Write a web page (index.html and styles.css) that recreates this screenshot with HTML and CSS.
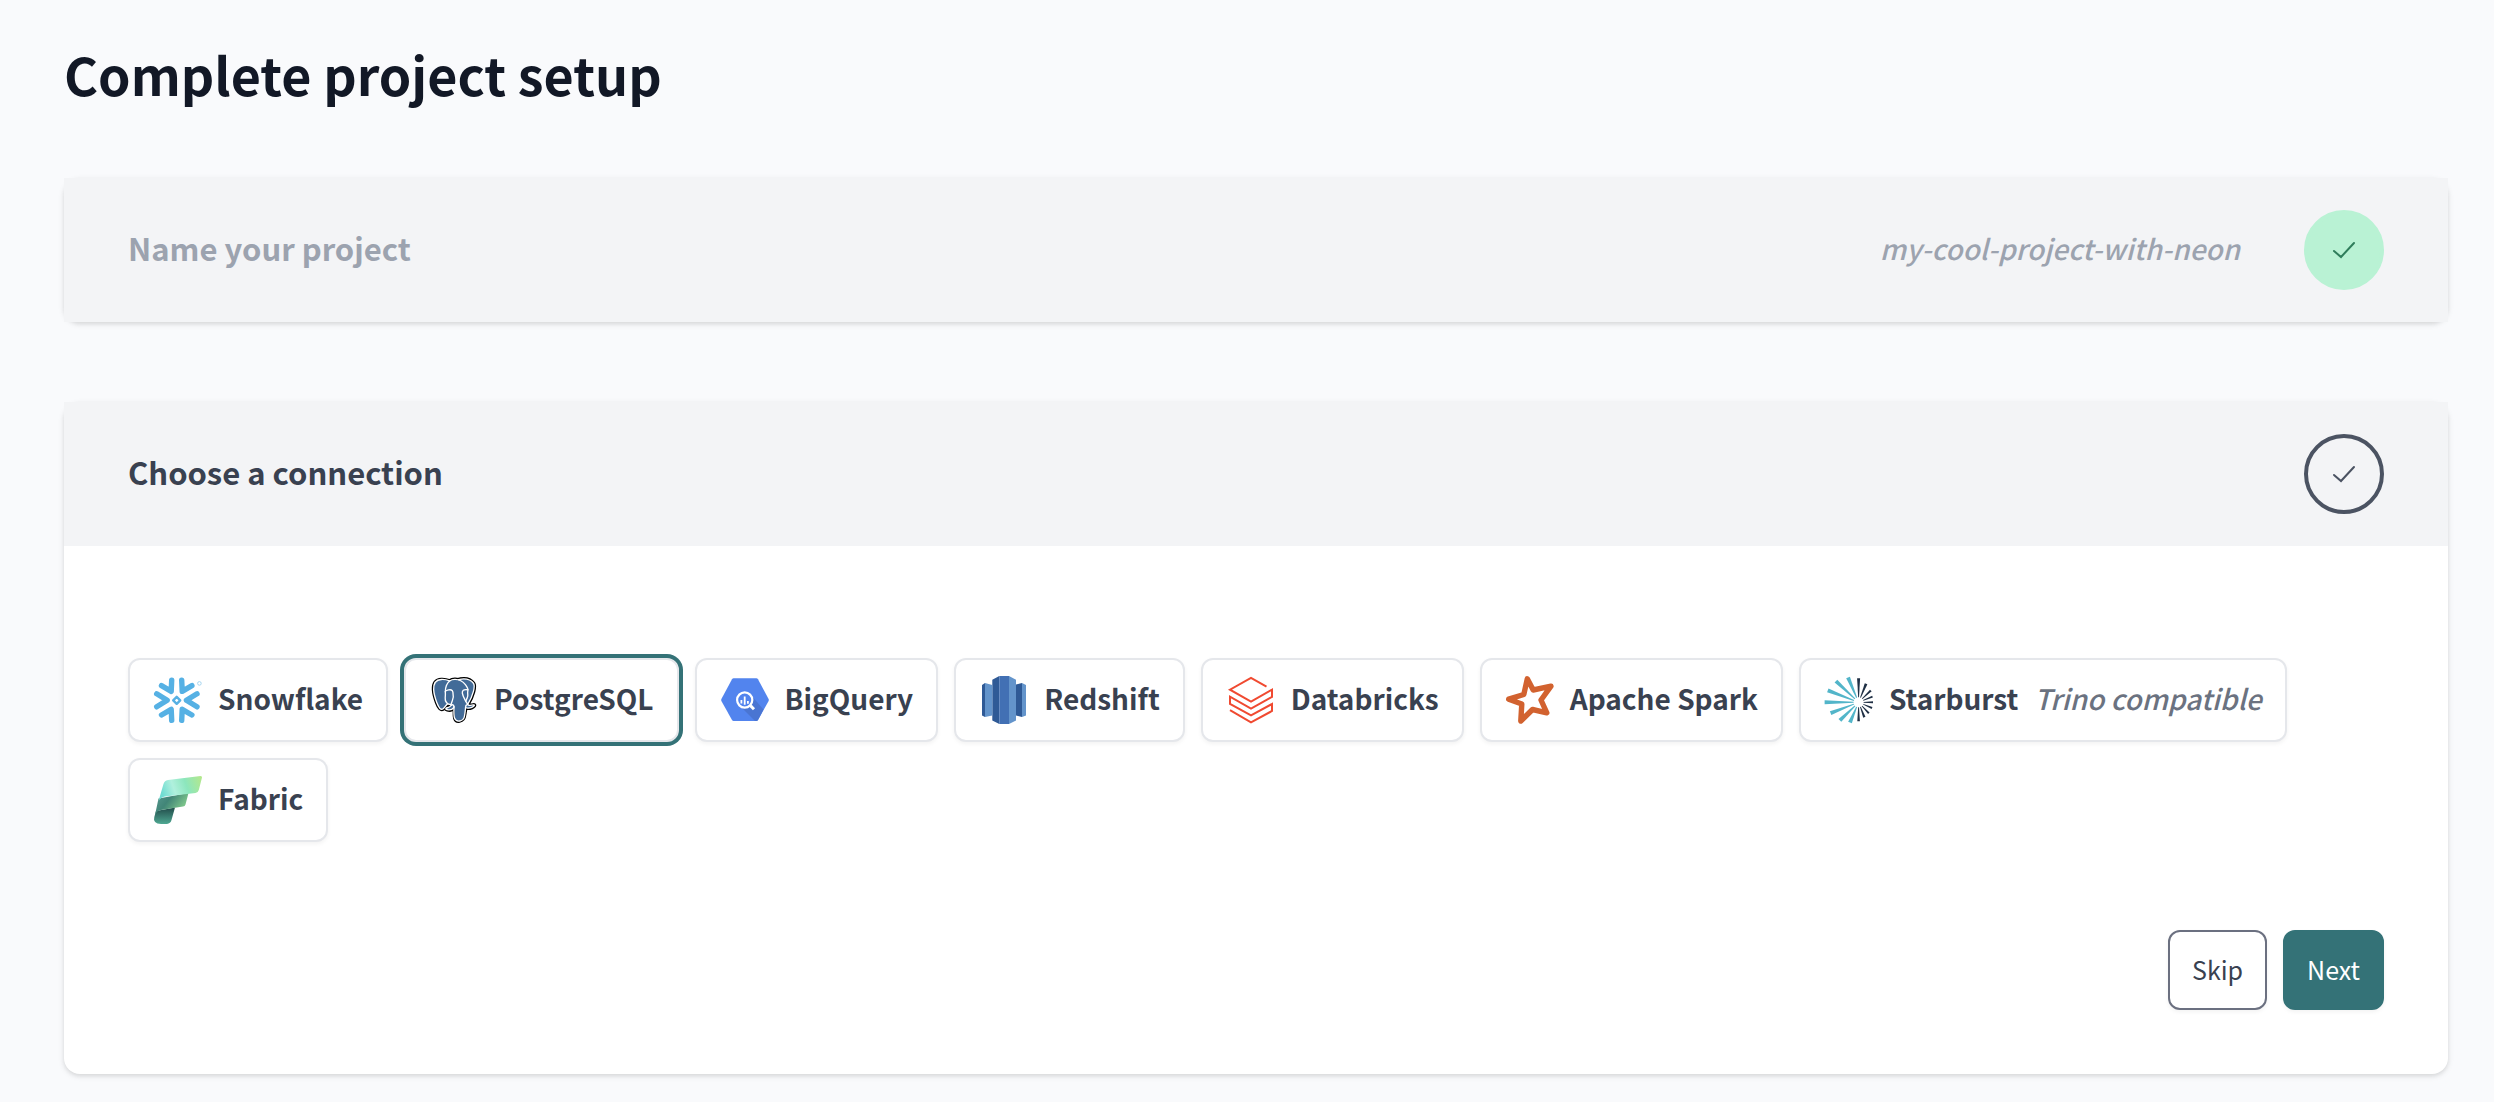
FILE: index.html
```html
<!DOCTYPE html>
<html lang="en">
<head>
<meta charset="utf-8">
<meta name="viewport" content="width=device-width, initial-scale=1">
<title>Complete project setup</title>
<link rel="stylesheet" href="styles.css">
</head>
<body>
<main class="page">
  <h1 class="page-title">Complete project setup</h1>

  <section class="card">
    <header class="card-header">
      <h2 class="card-title muted">Name your project</h2>
      <span class="project-name">my-cool-project-with-neon</span>
      <span class="status status-done">
        <svg class="check" viewBox="0 0 24 24" aria-hidden="true"><path d="M2 13l7 6L22 5"/></svg>
      </span>
    </header>
  </section>

  <section class="card">
    <header class="card-header">
      <h2 class="card-title">Choose a connection</h2>
      <span class="status">
        <svg class="check" viewBox="0 0 24 24" aria-hidden="true"><path d="M2 13l7 6L22 5"/></svg>
      </span>
    </header>
    <div class="card-body">
      <div class="connections">
        <button type="button" class="connection">
          <svg class="logo" viewBox="0 0 48 48" aria-hidden="true">
            <g fill="none" stroke="#56b1e4" stroke-width="5.4" stroke-linecap="round" stroke-linejoin="round">
              <path d="M7.5 9.6L17.2 15.3L17.7 4.2M27.7 4.2L28.2 15.3L37.9 9.6M2.7 17.8L13.2 24.3L2.7 30.8M43 17.8L32.4 24.3L43 30.8M7.5 39L17.2 33.3L17.7 44.4M27.7 44.4L28.2 33.3L37.9 39"/>
              <path d="M22.7 20.8l3.5 3.5-3.5 3.5-3.5-3.5z" stroke-width="2.4"/>
            </g>
            <circle cx="45.4" cy="7.4" r="1.8" fill="none" stroke="#a5d5f0" stroke-width="1"/>
          </svg>
          <span class="label">Snowflake</span>
        </button>
        <button type="button" class="connection selected" aria-pressed="true">
          <svg class="logo" viewBox="0 0 432.071 445.383" aria-hidden="true">
            <path fill="#336791" stroke="#000" stroke-width="37" d="M402.395,271.23c-50.302,10.376-53.76-6.655-53.76-6.655c53.111-78.808,75.313-178.843,56.153-203.326c-52.27-66.785-142.752-35.2-144.262-34.38l-0.486,0.087c-9.938-2.063-21.06-3.292-33.56-3.496c-22.761-0.373-40.026,5.967-53.127,15.902c0,0-161.411-66.495-153.904,83.63c1.597,31.938,45.776,241.657,98.471,178.312c19.26-23.163,37.869-42.748,37.869-42.748c9.243,6.14,20.308,9.272,31.908,8.147l0.901-0.765c-0.28,2.876-0.152,5.689,0.361,9.019c-13.575,15.167-9.586,17.83-36.723,23.416c-27.459,5.659-11.328,15.734-0.796,18.367c12.768,3.193,42.307,7.716,62.266-20.224l-0.796,3.188c5.319,4.26,9.054,27.711,8.428,48.969c-0.626,21.259-1.044,35.854,3.147,47.254c4.191,11.4,8.368,37.05,44.042,29.406c29.809-6.388,45.256-22.942,47.405-50.555c1.525-19.631,4.976-16.729,5.194-34.28l2.768-8.309c3.192-26.611,0.507-35.196,18.872-31.203l4.463,0.392c13.517,0.615,31.208-2.174,41.591-7c22.358-10.376,35.618-27.7,13.573-23.148z"/>
            <path fill="#426b98" d="M402.395,271.23c-50.302,10.376-53.76-6.655-53.76-6.655c53.111-78.808,75.313-178.843,56.153-203.326c-52.27-66.785-142.752-35.2-144.262-34.38l-0.486,0.087c-9.938-2.063-21.06-3.292-33.56-3.496c-22.761-0.373-40.026,5.967-53.127,15.902c0,0-161.411-66.495-153.904,83.63c1.597,31.938,45.776,241.657,98.471,178.312c19.26-23.163,37.869-42.748,37.869-42.748c9.243,6.14,20.308,9.272,31.908,8.147l0.901-0.765c-0.28,2.876-0.152,5.689,0.361,9.019c-13.575,15.167-9.586,17.83-36.723,23.416c-27.459,5.659-11.328,15.734-0.796,18.367c12.768,3.193,42.307,7.716,62.266-20.224l-0.796,3.188c5.319,4.26,9.054,27.711,8.428,48.969c-0.626,21.259-1.044,35.854,3.147,47.254c4.191,11.4,8.368,37.05,44.042,29.406c29.809-6.388,45.256-22.942,47.405-50.555c1.525-19.631,4.976-16.729,5.194-34.28l2.768-8.309c3.192-26.611,0.507-35.196,18.872-31.203l4.463,0.392c13.517,0.615,31.208-2.174,41.591-7c22.358-10.376,35.618-27.7,13.573-23.148z"/>
            <g fill="none" stroke="#fff" stroke-width="13" stroke-linecap="round" stroke-linejoin="round">
              <path d="M215.866,286.484c-1.385,49.516,0.348,99.377,5.193,111.495c4.848,12.118,15.223,35.688,50.9,28.045c29.806-6.39,40.651-18.756,45.357-46.051c3.466-20.082,10.148-75.854,11.005-87.281"/>
              <path d="M173.104,38.256c0,0-161.521-66.016-154.012,84.109c1.597,31.938,45.779,241.664,98.473,178.316c19.256-23.166,36.671-41.335,36.671-41.335"/>
              <path d="M260.349,26.207c-5.591,1.753,89.848-34.889,144.087,34.417c19.159,24.484-3.043,124.519-56.153,203.329"/>
              <path d="M348.282,263.953c0,0,3.461,17.036,53.764,6.653c22.04-4.552,8.776,12.774-13.577,23.155c-18.345,8.514-59.474,10.696-60.146-1.069c-1.729-30.355,21.647-21.133,19.96-28.739c-1.525-6.85-11.979-13.573-18.894-30.338c-6.037-14.633-82.796-126.849,21.287-110.183c3.813-0.789-27.146-99.002-124.553-100.599c-97.385-1.597-94.19,119.762-94.19,119.762"/>
              <path d="M188.604,274.334c-13.577,15.166-9.584,17.829-36.723,23.417c-27.459,5.66-11.326,15.733-0.797,18.365c12.768,3.195,42.307,7.718,62.266-20.229c6.078-8.509-0.036-22.086-8.385-25.547c-4.034-1.671-9.428-3.765-16.361,3.994z"/>
              <path d="M187.715,274.069c-1.368-8.917,2.93-19.528,7.536-31.942c6.922-18.626,22.893-37.255,10.117-96.339c-9.523-44.029-73.396-9.163-73.436-3.193c-0.039,5.968,2.889,30.26-1.067,58.548c-5.162,36.913,23.488,68.132,56.479,64.938"/>
              <path d="M350.676,123.432c0.555,9.981-2.15,16.78-2.491,27.408c-0.504,15.448,7.365,33.13-4.491,50.843c-6,12-10,22-14,32"/>
            </g>
          </svg>
          <span class="label">PostgreSQL</span>
        </button>
        <button type="button" class="connection">
          <svg class="logo" viewBox="0 0 48 48" aria-hidden="true">
            <path fill="#5284ee" d="M12.6 2.3H35.4Q36.4 2.3 37 3.3L47.6 23Q48 24 47.6 25L37 44Q36.4 45 35.4 45H12.6Q11.6 45 11 44L.4 25Q0 24 .4 23L11 3.3Q11.6 2.3 12.6 2.3z"/>
            <path fill="#4a75d2" d="M29.5 18.5L42.5 33.5L37 44Q36.4 45 35.4 45H34L18.5 29.5z"/>
            <circle cx="23.7" cy="24" r="7.6" fill="#5284ee" stroke="#fff" stroke-width="2.2"/>
            <path fill="none" stroke="#fff" stroke-width="1.8" d="M20.4 24v3.4M23.7 20.5v8.2M26.9 25v2.8"/>
            <path fill="none" stroke="#fff" stroke-width="3" d="M29.2 29.4l3.8 3.8"/>
          </svg>
          <span class="label">BigQuery</span>
        </button>
        <button type="button" class="connection">
          <svg class="logo" viewBox="0 0 48 48" aria-hidden="true">
            <path fill="#2f5a96" d="M2 9l3-2v34l-3-1.6zM12.3 3.8L19.3 0v48l-7-3.6zM36 8.5l6-1.5v34l-6-1.5z"/>
            <path fill="#6394cb" d="M5 7l7.3 2v30.5L5 41zM29 0l7 3.8v40.6L29 48zM42 7l4 2v30.4L42 41z"/>
            <path fill="#4270b4" d="M19.3 0H29v48h-9.7z"/>
          </svg>
          <span class="label">Redshift</span>
        </button>
        <button type="button" class="connection">
          <svg class="logo" viewBox="0 0 48 48" aria-hidden="true">
            <path fill="none" stroke="#f04a31" stroke-width="2" d="M39.5 10.6L24 2L3 13.7L24 25.5L45 13.7V20.8L24 32.5L3 20.6V28L24 39.3L45 28V35L24 46.3L3 34.2"/>
          </svg>
          <span class="label">Databricks</span>
        </button>
        <button type="button" class="connection">
          <svg class="logo" viewBox="0 0 48 48" aria-hidden="true">
            <path fill="none" stroke="#d2622f" stroke-width="5.4" stroke-linejoin="round" d="M21.3 2.8L27.2 14L45 10.2L35 24L40.8 36.8L26.5 33.5L14.8 45L15.8 28L2.7 23.2L17.8 18.5z"/>
          </svg>
          <span class="label">Apache Spark</span>
        </button>
        <button type="button" class="connection">
          <svg class="logo" viewBox="0 0 48 48" aria-hidden="true">
            <g transform="translate(33.6 26.3)">
              <g fill="#52b5c9">
                <path transform="rotate(247)" d="M5-.5L27-2V2L5 .5z"/>
                <path transform="rotate(223)" d="M5-.5L31-2V2L5 .5z"/>
                <path transform="rotate(201)" d="M5-.5L33-2V2L5 .5z"/>
                <path transform="rotate(180)" d="M5-.5L34-2V2L5 .5z"/>
                <path transform="rotate(159)" d="M5-.5L30-2V2L5 .5z"/>
                <path transform="rotate(136)" d="M5-.5L26-2V2L5 .5z"/>
                <path transform="rotate(113)" d="M5-.5L22-2V2L5 .5z"/>
              </g>
              <g fill="#1f2f44">
                <path transform="rotate(270)" d="M5-.4L24-1.5V1.5L5 .4z"/>
                <path transform="rotate(292)" d="M5-.4L20-1.4V1.4L5 .4z"/>
                <path transform="rotate(316)" d="M5-.4L17-1.2V1.2L5 .4z"/>
                <path transform="rotate(338)" d="M5-.4L15-1V1L5 .4z"/>
                <path d="M5-.4L14.4-1V1L5 .4z"/>
                <path transform="rotate(23)" d="M5-.4L14.6-1V1L5 .4z"/>
                <path transform="rotate(47)" d="M5-.4L15-1V1L5 .4z"/>
                <path transform="rotate(69)" d="M5-.4L16-1.2V1.2L5 .4z"/>
                <path transform="rotate(90)" d="M5-.4L19-1.3V1.3L5 .4z"/>
              </g>
            </g>
          </svg>
          <span class="label">Starburst</span>
          <span class="label note">Trino compatible</span>
        </button>
        <button type="button" class="connection">
          <svg class="logo" viewBox="0 0 48 48" aria-hidden="true">
            <defs>
              <linearGradient id="fabric-top" x1="0" x2="1" y1=".3" y2=".1"><stop offset="0" stop-color="#6fdcd2"/><stop offset=".3" stop-color="#b0f0dd"/><stop offset=".6" stop-color="#8ce6bd"/><stop offset="1" stop-color="#b4e88c"/></linearGradient>
              <linearGradient id="fabric-mid" x1="0" x2="1" y1="0" y2=".5"><stop offset="0" stop-color="#5a9a92"/><stop offset=".45" stop-color="#418577"/><stop offset="1" stop-color="#86cf8e"/></linearGradient>
              <linearGradient id="fabric-low" x1="0" x2="0" y1="0" y2="1"><stop offset="0" stop-color="#214b4a"/><stop offset="1" stop-color="#4fa892"/></linearGradient>
            </defs>
            <path fill="url(#fabric-low)" d="M2 35L21 31.5L17.5 44Q16.5 47.800 13 47.900L7 48Q-1.500 47.500 .3 41z"/>
            <path fill="url(#fabric-mid)" d="M4.5 22.5L34.5 17L31.500 28.500Q31 30.300 29 30.600L7 34Q3 34.700 1 39z"/>
            <path fill="url(#fabric-top)" d="M9.5 8Q10.500 4.700 14 4L46.500 0Q48.300 0 48 1.500L44.800 14Q44.200 16.500 41.500 17L11 20.500Q7 21 4.500 25z"/>
          </svg>
          <span class="label">Fabric</span>
        </button>
      </div>
      <div class="actions">
        <button type="button" class="action">Skip</button>
        <button type="button" class="action action-primary">Next</button>
      </div>
    </div>
  </section>
</main>
</body>
</html>
```

FILE: styles.css
```css
* {
  box-sizing: border-box;
}

body {
  margin: 0;
  background: #f9fafc;
  color: #394150;
  font-family: "Noto Sans CJK SC", "Noto Sans", sans-serif;
}

.page {
  display: flex;
  flex-direction: column;
  padding: 36px 46px 28px 64px;
}

.page-title {
  margin: 0 0 66px;
  color: #121826;
  font-size: 52px;
  font-weight: 700;
  line-height: 76px;
}

.card {
  margin-bottom: 80px;
  border-radius: 16px;
  background: #fff;
  box-shadow: 0 2px 6px rgba(0, 0, 0, 0.1), 0 2px 4px rgba(0, 0, 0, 0.06);
}

.card:last-child {
  margin-bottom: 0;
}

.card-header {
  display: flex;
  align-items: center;
  gap: 64px;
  padding: 32px 64px;
  background: #f3f4f6;
}

.card-title {
  flex: 1;
  margin: 0;
  padding-bottom: 4px;
  font-size: 31px;
  font-weight: 700;
  line-height: 48px;
}

.muted {
  color: #9ca3af;
}

.project-name {
  padding-bottom: 4px;
  color: #9ca3af;
  font-size: 28px;
  font-style: italic;
  font-weight: 500;
  line-height: 48px;
}

.status {
  display: flex;
  align-items: center;
  justify-content: center;
  width: 80px;
  height: 80px;
  border: 4px solid #4b5362;
  border-radius: 50%;
  color: #4b5362;
}

.status-done {
  border-color: #b9f2d4;
  background: #b9f2d4;
  color: #2f7d5b;
}

.check {
  width: 24px;
  height: 24px;
  fill: none;
  stroke: currentColor;
  stroke-width: 2;
  stroke-linecap: round;
}

.card-body {
  padding: 112px 64px 64px;
}

.connections {
  display: flex;
  flex-wrap: wrap;
  gap: 16px;
}

.connection {
  display: flex;
  align-items: center;
  gap: 16px;
  height: 84px;
  padding: 0 23px 0 24px;
  border: 2px solid #e5e7eb;
  border-radius: 12px;
  background: #fff;
  box-shadow: 0 2px 4px rgba(0, 0, 0, 0.05);
  color: #394150;
  font: 700 28px/48px "Noto Sans CJK SC", "Noto Sans", sans-serif;
  white-space: nowrap;
}

.selected {
  box-shadow: 0 0 0 4px #347277;
}

.logo {
  width: 48px;
  height: 48px;
  overflow: visible;
}

.selected .logo {
  padding: 1px;
}

.label {
  padding-bottom: 4px;
}

.note {
  color: #6b7280;
  font-style: italic;
  font-weight: 500;
}

.actions {
  display: flex;
  justify-content: flex-end;
  gap: 16px;
  margin-top: 88px;
}

.action {
  height: 80px;
  padding: 0 22px 2px;
  border: 2px solid #6b7080;
  border-radius: 12px;
  background: #fff;
  box-shadow: 0 2px 4px rgba(0, 0, 0, 0.05);
  color: #394150;
  font: 400 25px/40px "Noto Sans CJK SC", "Noto Sans", sans-serif;
}

.action-primary {
  border-color: #347277;
  background: #347277;
  color: #fff;
}
```
